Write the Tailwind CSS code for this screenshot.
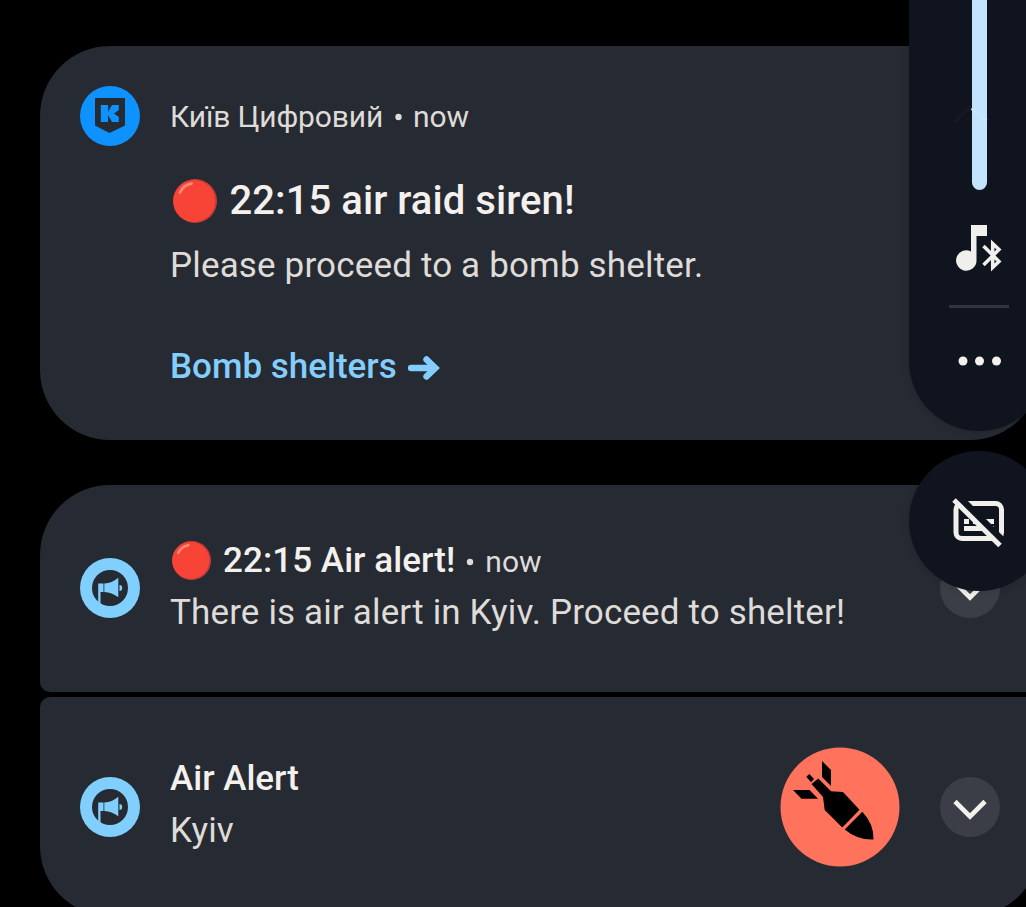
<!DOCTYPE html>
<html lang="en">
<head>
    <meta charset="UTF-8">
    <meta name="viewport" content="width=device-width, initial-scale=1.0">
    <title>Notifications</title>
    <script src="https://cdn.jsdelivr.net/npm/@tailwindcss/browser@4"></script>
</head>
<body class="relative w-[1026px] h-[907px] overflow-hidden bg-black font-['Roboto','Noto_Sans',sans-serif] text-[#dedbd8] whitespace-nowrap">
    <svg class="hidden">
        <symbol id="ball" viewBox="0 0 44 44">
            <circle cx="22" cy="22" r="22" fill="#c73a38"/>
            <circle cx="21.2" cy="22" r="20.9" fill="#f84437"/>
            <path d="M7 13.500Q10.500 6 18.500 4.700" fill="none" stroke="#ff8a7a" stroke-width="2.800" stroke-linecap="round"/>
        </symbol>
        <symbol id="megaphone" viewBox="0 0 60 60">
            <circle cx="30" cy="30" r="30" fill="#80cfff"/>
            <circle cx="30" cy="30" r="18" fill="#262a32"/>
            <path d="M18.200 25.600H23.500V34H20.500V46L18.200 44Z" fill="#80cfff"/>
            <path d="M24.300 25.600Q32 25 38.300 19.700V39.300Q32 34.500 24.300 34Z" fill="#80cfff"/>
            <path d="M39.500 27Q42.200 27 42.200 30T39.500 33Z" fill="#80cfff"/>
        </symbol>
        <symbol id="chevron" viewBox="0 0 60 60">
            <circle cx="30" cy="30" r="30" fill="#3b3e46"/>
            <path d="M15 24.500L30 39.500L45 24.500" fill="none" stroke="#f3f1ee" stroke-width="4.600"/>
        </symbol>
    </svg>

    <main class="w-[1000px] ml-10 pt-[46px]">
        <!-- Kyiv Digital -->
        <section class="h-[394px] rounded-[70px] bg-[#262a32] pl-10 pt-10 flex gap-[30px]">
            <svg class="size-[60px] shrink-0" viewBox="0 0 60 60">
                <circle cx="30" cy="30" r="30" fill="#0d92ff"/>
                <path d="M15 12H45V39.500L29.500 47L15 39.500Z" fill="#262a32"/>
                <path d="M20.800 19H28V26L32 19H38.800V24L34 27.500L38.800 31V36H32L28 29V36H20.800Z" fill="#0d92ff"/>
            </svg>
            <div>
                <div class="mt-4 h-[30px] text-[30px] leading-[30px] tracking-[-0.150px] flex"><span>Київ Цифровий</span><svg class="w-[30px] h-[30px]"><circle cx="15.500" cy="15" r="3.200" fill="#dedbd8"/></svg><span>now</span></div>
                <div class="mt-[49px] h-[40px] flex items-center gap-[13px] text-[40px] leading-[40px] font-medium tracking-[0.060px] text-[#f3f0ed]">
                    <svg class="size-[44px] ml-[2.500px]"><use href="#ball"/></svg>
                    <span>22:15 air raid siren!</span>
                </div>
                <div class="mt-[25px] text-[35px] leading-[40px] tracking-[0.160px]">Please proceed to a bomb shelter.</div>
                <div class="mt-[61px] flex items-center text-[35px] leading-[40px] font-medium text-[#83ceff]">
                    <span>Bomb shelters</span>
                    <svg class="w-8 h-[26px] ml-[11px] mt-px" viewBox="0 0 32 26">
                        <path d="M3 13H22" fill="none" stroke="#83ceff" stroke-width="6.400" stroke-linecap="round"/>
                        <path d="M18.500 4.500L27 13L18.500 21.500" fill="none" stroke="#83ceff" stroke-width="6.400" stroke-linecap="round" stroke-linejoin="round"/>
                        <path d="M20.500 2.500L32 13L20.500 23.500Z" fill="#83ceff"/>
                    </svg>
                </div>
            </div>
        </section>

        <!-- Air alert -->
        <section class="mt-[45px] h-[207px] rounded-t-[70px] rounded-b-[10px] bg-[#262a32] px-10 pb-px flex items-center gap-[30px]">
            <svg class="size-[60px] shrink-0"><use href="#megaphone"/></svg>
            <div class="grow -mt-[2px]">
                <div class="h-[40px] flex items-center text-[35px] leading-[40px] font-medium tracking-[0.060px] text-[#f3f0ed]">
                    <svg class="size-[39px] ml-[2px] mr-3 -mt-[2px]"><use href="#ball"/></svg>
                    <span>22:15 Air alert!</span>
                    <span class="flex text-[30px] leading-[30px] mt-px font-normal tracking-normal text-[#dedbd8]"><svg class="w-[30px] h-[30px]"><circle cx="15" cy="15" r="3.200" fill="#dedbd8"/></svg><span>now</span></span>
                </div>
                <div class="mt-3 text-[35px] leading-[40px] tracking-[0.150px]">There is air alert in Kyiv. Proceed to shelter!</div>
            </div>
            <svg class="size-[60px] shrink-0"><use href="#chevron"/></svg>
        </section>

        <section class="mt-[5px] h-[219px] rounded-t-[10px] rounded-b-[70px] bg-[#262a32] px-10 flex items-center gap-[30px]">
            <svg class="size-[60px] shrink-0"><use href="#megaphone"/></svg>
            <div class="grow -mt-[3px]">
                <div class="text-[35px] leading-[40px] font-medium text-[#f3f0ed]">Air Alert</div>
                <div class="mt-3 text-[35px] leading-[40px] tracking-[0.150px]">Kyiv</div>
            </div>
            <svg class="size-[120px] shrink-0 mr-[10px]" viewBox="0 0 120 120">
                <circle cx="60" cy="60" r="59.500" fill="#ff735d"/>
                <g fill="#000">
                    <path d="M42 14L51 23V39L42 30Z"/>
                    <path d="M13 43H29.500L38 51.700H21.500Z"/>
                    <path d="M26.300 29.700L29.300 27L34 32L31 35.200Z"/>
                    <path d="M31.500 37L38.300 31.500L51 44.300L63 45L79.500 62.700L62.300 80.500L44.700 63L43 50Z"/>
                    <path d="M82.300 64.700Q94 77 93.500 92.500Q77 93 64.700 82.500Z"/>
                </g>
            </svg>
            <svg class="size-[60px] shrink-0"><use href="#chevron"/></svg>
        </section>
    </main>

    <!-- Volume panel, lies over the notifications -->
    <aside class="absolute left-[909px] top-0 w-[140px]">
        <div class="h-[431px] rounded-b-[70px] bg-[#10141e] flex flex-col items-center shadow-[0_0_8px_rgba(0,0,0,0.15)]">
            <svg class="w-[140px] h-[431px]" viewBox="909 0 140 431">
                <path d="M972 0H987V182.500A7.500 7.500 0 0 1 972 182.500Z" fill="#c2e4fe"/>
                <path d="M954 122L971 106" fill="none" stroke="#151922" stroke-width="4"/>
                <path d="M972 108L986 121" fill="none" stroke="#c8e7fd" stroke-width="4"/>
                <path d="M971 225H987V236H976.500V260.500A10.200 10.200 0 1 1 971 251.500Z" fill="#f1efec"/>
                <path d="M983.500 246L999 261.500L992.700 267.500V243.500L999 249.500L983.500 265" fill="none" stroke="#f1efec" stroke-width="3.500"/>
                <path d="M949 306.500H1009" stroke="#31343d" stroke-width="3"/>
                <circle cx="963" cy="361" r="4.500" fill="#f3f1ee"/>
                <circle cx="979.500" cy="361" r="4.500" fill="#f3f1ee"/>
                <circle cx="996.500" cy="361" r="4.500" fill="#f3f1ee"/>
            </svg>
        </div>
        <div class="mt-5 size-[140px] rounded-full bg-[#10141e] shadow-[0_0_8px_rgba(0,0,0,0.15)]">
            <!-- captions off -->
            <svg class="size-[140px]" viewBox="909 451 140 140">
                <rect x="956" y="503.500" width="45.500" height="35" rx="6" fill="none" stroke="#f1efec" stroke-width="5"/>
                <path d="M964 521.500H969M973 521.500H980M984 521.500H994M964 528.500H989M992 528.500H994" stroke="#f1efec" stroke-width="4.800"/>
                <path d="M958 496L1006 544" stroke="#10141e" stroke-width="7"/>
                <path d="M954 500L1000 545.500" stroke="#f1efec" stroke-width="5"/>
            </svg>
        </div>
    </aside>
</body>
</html>
